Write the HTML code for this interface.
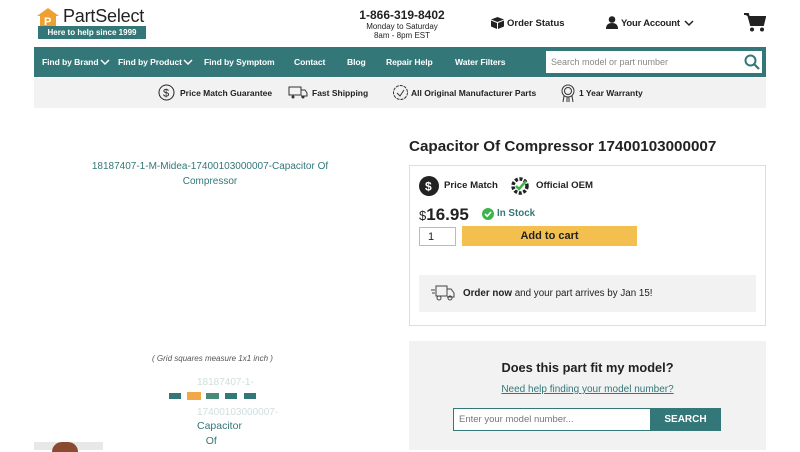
<!DOCTYPE html>
<html><head><meta charset="utf-8"><style>
*{box-sizing:border-box;margin:0;padding:0}
body{width:800px;height:450px;overflow:hidden;background:#fff;font-family:"Liberation Sans",sans-serif;color:#222;position:relative}
.a{position:absolute;white-space:nowrap}
.teal{color:#337778}
</style></head><body>
<svg class="a" style="left:36px;top:7px" width="24" height="20" viewBox="0 0 24 20"><path d="M1 9 L12 1 L23 9 L20 9 L20 20 L4 20 L4 9Z" fill="#f0a030"/><text x="8" y="18" font-size="11" font-weight="bold" fill="#fff" font-family="Liberation Sans">P</text></svg>
<div class="a" style="left:63px;top:6px;font-size:18px;color:#222;letter-spacing:-0.2px">PartSelect</div>
<div class="a" style="left:38px;top:26px;width:108px;height:13px;background:#337778;color:#fff;font-size:8px;font-weight:bold;text-align:center;line-height:13px">Here to help since 1999</div>
<div class="a" style="left:330px;top:8px;width:144px;text-align:center;font-size:12px;font-weight:bold">1-866-319-8402</div>
<div class="a" style="left:330px;top:22px;width:144px;text-align:center;font-size:8px;line-height:9px;white-space:normal">Monday to Saturday<br>8am - 8pm EST</div>
<svg class="a" style="left:491px;top:17px" width="13" height="12" viewBox="0 0 13 12"><path d="M6.5 0 L13 2.5 L6.5 5 L0 2.5Z M0 3.5 L6 6 L6 12 L0 9.5Z M13 3.5 L7 6 L7 12 L13 9.5Z" fill="#222"/></svg>
<div class="a" style="left:507px;top:18px;font-size:9.5px;font-weight:bold">Order Status</div>
<svg class="a" style="left:606px;top:16px" width="12" height="13" viewBox="0 0 12 13"><circle cx="6" cy="3.5" r="3.3" fill="#222"/><path d="M0 13 Q0 7 6 7 Q12 7 12 13Z" fill="#222"/></svg>
<div class="a" style="left:621px;top:18px;font-size:9.5px;font-weight:bold;letter-spacing:-0.2px">Your Account</div>
<svg class="a" style="left:684px;top:20px" width="10" height="7"><path d="M1 1 L5 5 L9 1" stroke="#222" stroke-width="1.5" fill="none"/></svg>
<svg class="a" style="left:744px;top:13px" width="22" height="19" viewBox="0 0 22 19"><path d="M0 1 L4 1 L7 12 L19 12 L21 4 L5 4" fill="#222" stroke="#222" stroke-width="2"/><circle cx="8" cy="16.5" r="2" fill="#222"/><circle cx="18" cy="16.5" r="2" fill="#222"/></svg>
<!-- nav -->
<div class="a" style="left:34px;top:47px;width:732px;height:30px;background:#337778"></div>
<div class="a" style="left:34px;top:57px;font-size:8.6px;font-weight:bold;color:#fff;letter-spacing:-0.1px">
<span class="a" style="left:8px">Find by Brand</span>
<span class="a" style="left:84px">Find by Product</span>
<span class="a" style="left:170px">Find by Symptom</span>
<span class="a" style="left:260px">Contact</span>
<span class="a" style="left:313px">Blog</span>
<span class="a" style="left:352px">Repair Help</span>
<span class="a" style="left:421px">Water Filters</span></div>
<svg class="a" style="left:100px;top:59px" width="10" height="7"><path d="M1 1 L5 5 L9 1" stroke="#fff" stroke-width="1.5" fill="none"/></svg>
<svg class="a" style="left:183px;top:59px" width="10" height="7"><path d="M1 1 L5 5 L9 1" stroke="#fff" stroke-width="1.5" fill="none"/></svg>
<div class="a" style="left:546px;top:51px;width:216px;height:22px;background:#fff;font-size:9px;color:#888;padding:6px 5px">Search model or part number</div>
<svg class="a" style="left:744px;top:54px" width="16" height="16"><circle cx="6.5" cy="6.5" r="5" stroke="#337778" stroke-width="2" fill="none"/><path d="M10 10 L15 15" stroke="#337778" stroke-width="2.2"/></svg>
<!-- benefits -->
<div class="a" style="left:34px;top:78px;width:732px;height:30px;background:#f2f2f2"></div>
<svg class="a" style="left:158px;top:84px" width="17" height="17"><circle cx="8.5" cy="8.5" r="7.5" stroke="#222" fill="none"/><text x="5" y="12.5" font-size="11" fill="#222">$</text></svg>
<div class="a" style="left:180px;top:88px;font-size:8.5px;font-weight:bold">Price Match Guarantee</div>
<svg class="a" style="left:288px;top:86px" width="20" height="13"><rect x="1" y="1" width="12" height="8" fill="none" stroke="#333"/><path d="M13 4 L17 4 L19 7 L19 10 L13 10" fill="none" stroke="#333"/><circle cx="5" cy="11" r="1.5" fill="#333"/><circle cx="15" cy="11" r="1.5" fill="#333"/></svg>
<div class="a" style="left:312px;top:88px;font-size:8.5px;font-weight:bold">Fast Shipping</div>
<svg class="a" style="left:392px;top:84px" width="17" height="17"><circle cx="8.5" cy="8.5" r="7" stroke="#333" fill="none" stroke-dasharray="3 1"/><path d="M5 9 L8 12 L12 6" stroke="#333" fill="none"/></svg>
<div class="a" style="left:411px;top:88px;font-size:8.5px;font-weight:bold">All Original Manufacturer Parts</div>
<svg class="a" style="left:560px;top:84px" width="16" height="19"><circle cx="8" cy="7" r="6" stroke="#333" fill="none"/><circle cx="8" cy="7" r="3.5" stroke="#333" fill="none"/><path d="M4 12 L3 18 M12 12 L13 18 M7 13 L7 18 M9 13 L9 18" stroke="#333"/></svg>
<div class="a" style="left:579px;top:88px;font-size:8.5px;font-weight:bold">1 Year Warranty</div>
<!-- left -->
<div class="a teal" style="left:80px;top:159px;width:260px;text-align:center;font-size:10px;line-height:15px;white-space:normal">18187407-1-M-Midea-17400103000007-Capacitor Of Compressor</div>
<div class="a" style="left:120px;top:354px;width:185px;text-align:center;font-size:8px;font-style:italic;color:#555">( Grid squares measure 1x1 inch )</div>
<div class="a" style="left:197px;top:375px;font-size:10px;color:#cfdede;line-height:15px">18187407-1-<br><br>17400103000007-</div>
<div class="a teal" style="left:197px;top:419px;font-size:10.5px;line-height:15px">Capacitor<br>&nbsp;&nbsp;&nbsp;Of</div>
<div class="a" style="left:169px;top:393px;width:12px;height:6px;background:#337778"></div>
<div class="a" style="left:187px;top:392px;width:14px;height:8px;background:#f0a848"></div>
<div class="a" style="left:206px;top:393px;width:13px;height:6px;background:#4a8a7a"></div>
<div class="a" style="left:225px;top:393px;width:12px;height:6px;background:#337778"></div>
<div class="a" style="left:244px;top:393px;width:12px;height:6px;background:#337778"></div>
<div class="a" style="left:34px;top:442px;width:69px;height:8px;background:#e8e8e8"></div>
<div class="a" style="left:52px;top:442px;width:26px;height:10px;background:#8a4a30;border-radius:13px 13px 0 0"></div>
<!-- right -->
<div class="a" style="left:409px;top:138px;font-size:15.2px;font-weight:bold">Capacitor Of Compressor 17400103000007</div>
<div class="a" style="left:409px;top:165px;width:357px;height:161px;border:1px solid #ddd"></div>
<svg class="a" style="left:419px;top:176px" width="20" height="20"><circle cx="10" cy="10" r="10" fill="#222"/><text x="6" y="14.5" font-size="12" font-weight="bold" fill="#fff" font-family="Liberation Sans">$</text></svg>
<div class="a" style="left:444px;top:180px;font-size:9.6px;font-weight:bold">Price Match</div>
<svg class="a" style="left:510px;top:176px" width="20" height="20"><circle cx="10" cy="10" r="7" fill="none" stroke="#222" stroke-width="3.5" stroke-dasharray="3 1.6"/><path d="M6 10 L9 13 L16 5" stroke="#3cb44a" stroke-width="2.5" fill="none"/></svg>
<div class="a" style="left:536px;top:180px;font-size:9.6px;font-weight:bold">Official OEM</div>
<div class="a" style="left:419px;top:205px;font-size:17px;font-weight:bold"><span style="font-weight:normal;font-size:13px">$</span>16.95</div>
<svg class="a" style="left:482px;top:208px" width="12" height="12"><circle cx="6" cy="6" r="6" fill="#3cb44a"/><path d="M3 6 L5.2 8.2 L9 4" stroke="#fff" stroke-width="1.6" fill="none"/></svg>
<div class="a" style="left:497px;top:208px;font-size:9.8px;font-weight:bold;color:#337778">In Stock</div>
<div class="a" style="left:419px;top:227px;width:37px;height:19px;border:1px solid #bbb;font-size:11px;padding:3px 8px">1</div>
<div class="a" style="left:462px;top:226px;width:175px;height:20px;background:#f3c04f;font-size:11px;font-weight:bold;text-align:center;line-height:20px">Add to cart</div>
<div class="a" style="left:419px;top:275px;width:337px;height:37px;background:#f2f2f2"></div>
<svg class="a" style="left:431px;top:285px" width="24" height="16"><rect x="5" y="1" width="11" height="10" fill="none" stroke="#444"/><path d="M16 4 L20 4 L23 8 L23 12 L16 12" fill="none" stroke="#444"/><path d="M0 5 L4 5 M1 8 L4 8" stroke="#444"/><circle cx="8" cy="13" r="2" fill="none" stroke="#444"/><circle cx="19" cy="13" r="2" fill="none" stroke="#444"/></svg>
<div class="a" style="left:463px;top:288px;font-size:9.8px"><b>Order now</b> and your part arrives by Jan 15!</div>
<div class="a" style="left:409px;top:341px;width:357px;height:109px;background:#f2f2f2"></div>
<div class="a" style="left:409px;top:360px;width:357px;text-align:center;font-size:12.8px;font-weight:bold">Does this part fit my model?</div>
<div class="a" style="left:409px;top:384px;width:357px;text-align:center;font-size:10px;color:#337778;text-decoration:underline">Need help finding your model number?</div>
<div class="a" style="left:453px;top:408px;width:198px;height:23px;background:#fff;border:1px solid #337778;font-size:9.5px;color:#777;padding:5px 5px">Enter your model number...</div>
<div class="a" style="left:650px;top:408px;width:71px;height:23px;background:#337778;color:#fff;font-size:10px;font-weight:bold;text-align:center;line-height:23px">SEARCH</div>
</body></html>
